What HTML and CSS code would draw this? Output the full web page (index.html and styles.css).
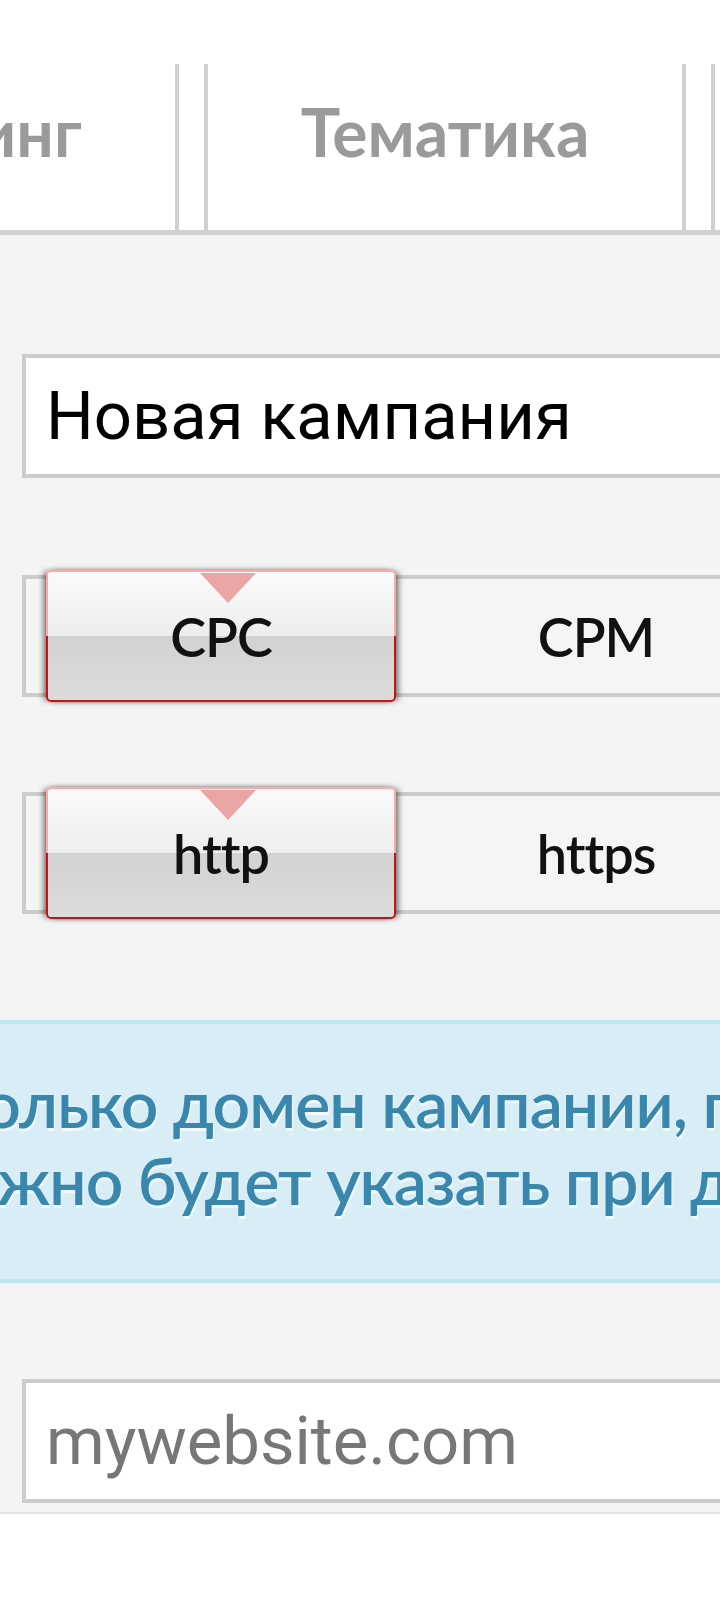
FILE: index.html
```html
<!DOCTYPE html>
<html lang="ru">
<head>
    <meta charset="UTF-8">
    <meta name="viewport" content="width=device-width, initial-scale=1.0">
    <title>Новая кампания</title>
    <link rel="stylesheet" href="styles.css">
</head>
<body>

<div class="header">
    <div class="tabs">
        <div class="tab">Таргетинг</div>
        <div class="tab">Тематика</div>
        <div class="tab">Бюджет</div>
    </div>
</div>

<div class="content">
    <input type="text" class="field" value="Новая кампания">

    <div class="toggle">
        <div class="opt active">CPC</div>
        <div class="opt">CPM</div>
    </div>

    <div class="toggle">
        <div class="opt active">http</div>
        <div class="opt">https</div>
    </div>

    <div class="info">
        <span class="info-line line-1">Укажите только домен кампании, полный адрес</span>
        <span class="info-line line-2">можно будет указать при добавлении объявлений</span>
    </div>

    <input type="text" class="field" placeholder="mywebsite.com">
</div>

</body>
</html>
```

FILE: styles.css
```css
body {
    margin: 0;
    background-color: #fff;
    overflow: hidden;
    font-family: Lato, "Open Sans", sans-serif;
}
.header {
    padding-top: 64px;
    border-bottom: 5px solid #d0d0d0;
    overflow: hidden;
}
.tabs {
    display: flex;
    gap: 25px;
    margin-left: -318px;
}
.tab {
    flex: none;
    height: 166px;
    box-sizing: border-box;
    padding: 28px 93px 0;
    border-left: 4px solid #d0d0d0;
    border-right: 4px solid #d0d0d0;
    color: #9a9a9a;
    font-size: 66px;
    font-weight: bold;
    line-height: 80px;
}
.content {
    background-color: #f4f4f4;
    padding: 119px 0 9px 22px;
    border-bottom: 2px solid #e2e2e2;
    overflow: hidden;
}
.field {
    display: block;
    width: 1000px;
    height: 124px;
    box-sizing: border-box;
    margin: 0;
    padding: 0 20px;
    border: 4px solid #ccc;
    border-radius: 0;
    background-color: #fff;
    color: #000;
    font-family: Roboto, sans-serif;
    font-size: 67px;
    outline: none;
}
.field::placeholder {
    color: #777;
}
.toggle {
    display: flex;
    width: 900px;
    height: 122px;
    box-sizing: border-box;
    margin-top: 97px;
    border: 4px solid #ccc;
    background-color: #f5f5f5;
}
.toggle + .toggle {
    margin-top: 95px;
}
.opt {
    flex: none;
    width: 400px;
    display: flex;
    align-items: center;
    justify-content: center;
    color: #111;
    font-size: 54px;
    font-weight: 600;
    letter-spacing: -1px;
}
.opt.active {
    position: relative;
    width: 350px;
    box-sizing: border-box;
    margin: -9px 0 -9px 20px;
    border: 2px solid transparent;
    border-radius: 5px;
    background: linear-gradient(#fbfbfb, #ededed 50%, #d2d2d2 50%, #dcdcdc) padding-box,
                linear-gradient(#ffa8a8 50%, #c41414 50%) border-box;
    box-shadow: -4px 0 6px -2px rgba(0, 0, 0, 0.6), 4px 0 6px -2px rgba(0, 0, 0, 0.6);
}
.opt.active::after {
    content: "";
    position: absolute;
    top: 1px;
    left: 152px;
    border-left: 28px solid transparent;
    border-right: 28px solid transparent;
    border-top: 30px solid #eaa6a6;
}
.info {
    margin: 106px -30px 0 -52px;
    padding: 40px 0 61px;
    border: 4px solid #bce8f1;
    background-color: #d9edf7;
    color: #3a87ad;
    font-size: 66px;
    font-weight: 600;
    line-height: 77px;
    letter-spacing: -1px;
    text-shadow: 1px 3px 0 rgba(255, 255, 255, 0.6);
}
.info-line {
    display: block;
    white-space: nowrap;
}
.line-1 {
    margin-left: -295px;
}
.line-2 {
    margin-left: -58px;
}
.content .field:last-child {
    margin-top: 96px;
}
```
